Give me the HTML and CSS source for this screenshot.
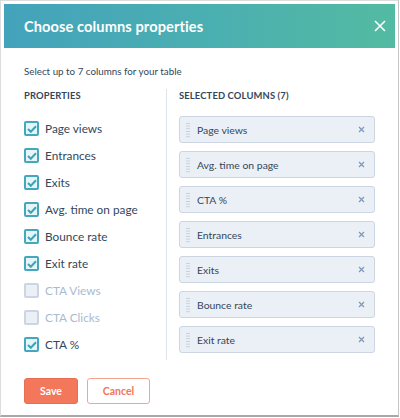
FILE: index.html
```html
<!DOCTYPE html>
<html>
<head>
<meta charset="utf-8">
<link rel="stylesheet" href="styles.css">
</head>
<body>
<div class="modal">
  <div class="header">
    <h1 class="title">Choose columns properties</h1>
    <svg class="close" width="12" height="12" viewBox="0 0 12 12"><path d="M1 1L11 11M11 1L1 11" stroke="#fff" stroke-width="1.6" fill="none"/></svg>
  </div>
  <div class="content">
    <p class="intro">Select up to 7 columns for your table</p>
    <div class="columns">
      <div class="left">
        <h2 class="heading">PROPERTIES</h2>
        <ul class="props">
          <li class="prop"><span class="cb on"><svg width="10" height="8" viewBox="0 0 10 8"><path d="M1 4l2.8 2.8L9 1.2" stroke="#3fa2b9" stroke-width="2" fill="none"/></svg></span>Page views</li>
          <li class="prop"><span class="cb on"><svg width="10" height="8" viewBox="0 0 10 8"><path d="M1 4l2.8 2.8L9 1.2" stroke="#3fa2b9" stroke-width="2" fill="none"/></svg></span>Entrances</li>
          <li class="prop"><span class="cb on"><svg width="10" height="8" viewBox="0 0 10 8"><path d="M1 4l2.8 2.8L9 1.2" stroke="#3fa2b9" stroke-width="2" fill="none"/></svg></span>Exits</li>
          <li class="prop"><span class="cb on"><svg width="10" height="8" viewBox="0 0 10 8"><path d="M1 4l2.8 2.8L9 1.2" stroke="#3fa2b9" stroke-width="2" fill="none"/></svg></span>Avg. time on page</li>
          <li class="prop"><span class="cb on"><svg width="10" height="8" viewBox="0 0 10 8"><path d="M1 4l2.8 2.8L9 1.2" stroke="#3fa2b9" stroke-width="2" fill="none"/></svg></span>Bounce rate</li>
          <li class="prop"><span class="cb on"><svg width="10" height="8" viewBox="0 0 10 8"><path d="M1 4l2.8 2.8L9 1.2" stroke="#3fa2b9" stroke-width="2" fill="none"/></svg></span>Exit rate</li>
          <li class="prop disabled"><span class="cb"></span>CTA Views</li>
          <li class="prop disabled"><span class="cb"></span>CTA Clicks</li>
          <li class="prop"><span class="cb on"><svg width="10" height="8" viewBox="0 0 10 8"><path d="M1 4l2.8 2.8L9 1.2" stroke="#3fa2b9" stroke-width="2" fill="none"/></svg></span>CTA %</li>
        </ul>
      </div>
      <div class="right">
        <h2 class="heading">SELECTED COLUMNS (7)</h2>
        <ul class="selected">
          <li class="item"><span class="grip"></span><span class="name">Page views</span><svg class="x" width="7" height="7" viewBox="0 0 7 7"><path d="M1 1L6 6M6 1L1 6" stroke="#7c98b6" stroke-width="1.2"/></svg></li>
          <li class="item"><span class="grip"></span><span class="name">Avg. time on page</span><svg class="x" width="7" height="7" viewBox="0 0 7 7"><path d="M1 1L6 6M6 1L1 6" stroke="#7c98b6" stroke-width="1.2"/></svg></li>
          <li class="item"><span class="grip"></span><span class="name">CTA %</span><svg class="x" width="7" height="7" viewBox="0 0 7 7"><path d="M1 1L6 6M6 1L1 6" stroke="#7c98b6" stroke-width="1.2"/></svg></li>
          <li class="item"><span class="grip"></span><span class="name">Entrances</span><svg class="x" width="7" height="7" viewBox="0 0 7 7"><path d="M1 1L6 6M6 1L1 6" stroke="#7c98b6" stroke-width="1.2"/></svg></li>
          <li class="item"><span class="grip"></span><span class="name">Exits</span><svg class="x" width="7" height="7" viewBox="0 0 7 7"><path d="M1 1L6 6M6 1L1 6" stroke="#7c98b6" stroke-width="1.2"/></svg></li>
          <li class="item"><span class="grip"></span><span class="name">Bounce rate</span><svg class="x" width="7" height="7" viewBox="0 0 7 7"><path d="M1 1L6 6M6 1L1 6" stroke="#7c98b6" stroke-width="1.2"/></svg></li>
          <li class="item"><span class="grip"></span><span class="name">Exit rate</span><svg class="x" width="7" height="7" viewBox="0 0 7 7"><path d="M1 1L6 6M6 1L1 6" stroke="#7c98b6" stroke-width="1.2"/></svg></li>
        </ul>
      </div>
    </div>
    <div class="footer">
      <button class="btn save">Save</button>
      <button class="btn cancel">Cancel</button>
    </div>
  </div>
</div>
</body>
</html>
```

FILE: styles.css
```css
* { box-sizing: border-box; }
html, body { margin: 0; padding: 0; background: #fff; }
body { font-family: Lato, "Open Sans", sans-serif; color: #33475b; }

.modal {
  width: 399px;
  height: 417px;
  border: 1px solid #dcdcdc;
  border-right-color: #c4c4c4;
  border-bottom: 2px solid #a8a8a8;
  padding: 3px 3px 0 3px;
  background: #fff;
}

.header {
  height: 44px;
  background: linear-gradient(90deg, #43a3bb 0%, #4bb0b0 55%, #53baa2 100%);
  display: flex;
  align-items: center;
  justify-content: space-between;
  padding: 0 9px 0 20px;
}
.title {
  margin: 0;
  font-size: 14.6px;
  font-weight: 700;
  color: #fff;
  letter-spacing: 0.1px;
}
.close { display: block; }

.content { padding: 15px 0 0 20px; }

.intro {
  margin: 0;
  font-size: 9.8px;
  line-height: 16px;
  color: #33475b;
}

.columns {
  display: flex;
  margin-top: 10px;
}
.left {
  width: 143px;
  border-right: 1px solid #dfe3eb;
  padding-bottom: 2px;
}
.right {
  padding-left: 12px;
  width: 208px;
}
.heading {
  margin: 0;
  font-size: 9.4px;
  line-height: 14px;
  font-weight: 700;
  letter-spacing: 0.15px;
  color: #33475b;
}

.props { list-style: none; margin: 12px 0 0 0; padding: 0; }
.prop {
  height: 27px;
  display: flex;
  align-items: center;
  font-size: 11.8px;
  color: #33475b;
}
.prop.disabled { color: #a9bbcf; }
.cb {
  width: 15px;
  height: 15px;
  border: 2px solid #cbd6e2;
  border-radius: 2px;
  background: #eaf0f6;
  margin-right: 6px;
  display: flex;
  align-items: center;
  justify-content: center;
  flex: none;
}
.cb.on { border-color: #45a7bc; background: #e5f5f8; }

.selected { list-style: none; margin: 13px 0 0 0; padding: 0; display: flex; flex-direction: column; gap: 8px; }
.item {
  height: 27px;
  width: 196px;
  background: #eaf0f6;
  border: 1px solid #cbd6e2;
  border-radius: 3px;
  display: flex;
  align-items: center;
  padding: 0 9px 0 6px;
  font-size: 10.4px;
  color: #33475b;
}
.grip {
  width: 4px;
  height: 16px;
  background-image: radial-gradient(circle, #c3ceda 0.6px, transparent 0.9px);
  background-size: 2px 2.7px;
  margin-right: 7px;
  flex: none;
}
.name { flex: 1; }
.x { display: block; }

.footer {
  display: flex;
  gap: 9px;
  margin-top: 18px;
}
.btn {
  height: 26px;
  font-family: Lato, "Open Sans", sans-serif;
  font-size: 10.5px;
  font-weight: 700;
  border-radius: 3px;
  padding: 0;
}
.save {
  width: 54px;
  background: #f2775b;
  border: 1px solid #e86d52;
  color: #fff;
}
.cancel {
  width: 63px;
  background: #fff;
  border: 1px solid #f2a591;
  color: #f07659;
}
```
